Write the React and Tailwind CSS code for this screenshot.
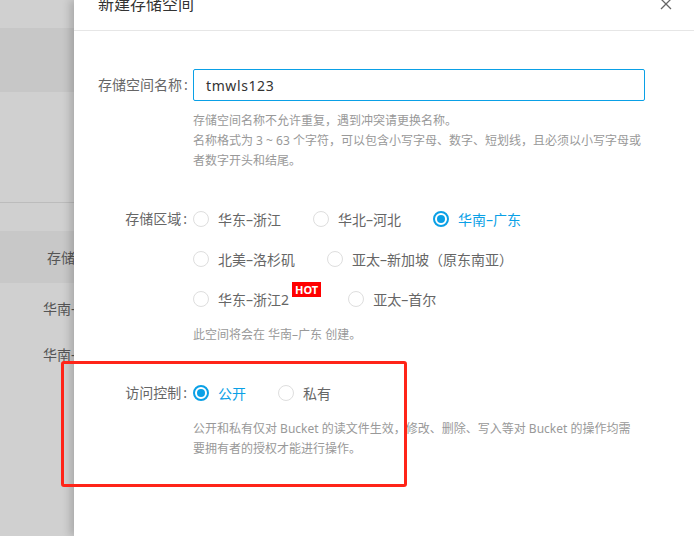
import React from "react";

const BLUE = "text-[#0aa0e6]";

const Radio = ({ checked, label, hot, className = "mr-[32px]" }) => (
  <label className={`flex items-center h-[40px] ${className}`}>
    {checked ? (
      <span className="w-[16px] h-[16px] rounded-full border-2 border-[#0aa0e6] flex items-center justify-center">
        <span className="w-[8px] h-[8px] rounded-full bg-[#0aa0e6]" />
      </span>
    ) : (
      <span className="w-[16px] h-[16px] rounded-full border border-[#dedede] bg-white" />
    )}
    <span className={`ml-[9px] text-[14px] whitespace-nowrap ${checked ? BLUE : "text-[#666]"}`}>{label}</span>
    {hot && (
      <span className="ml-[3px] -mt-[20px] h-[15px] px-[3px] bg-[#ff0000] text-white text-[11px] font-bold leading-[15px]">
        HOT
      </span>
    )}
  </label>
);

const Label = ({ text, lh = "leading-[40px]" }) => (
  <div className={`w-[89px] shrink-0 text-right text-[14px] text-[#666] whitespace-nowrap ${lh}`}>
    {text}
    <span className="ml-[2px]">:</span>
  </div>
);

const Help = ({ lines, className = "" }) => (
  <div className={`text-[12px] leading-[20px] text-[#999] ${className}`}>
    {lines.map((l, i) => (
      <div key={i} className="whitespace-nowrap">{l}</div>
    ))}
  </div>
);

export default function App() {
  return (
    <div
      className="w-[694px] h-[536px] flex overflow-hidden relative"
      style={{ fontFamily: '"Noto Sans", "Noto Sans CJK SC", sans-serif' }}
    >
      {/* dimmed page behind */}
      <div className="w-[74px] shrink-0 bg-[#d0d0d0] overflow-hidden text-[14px] text-[#555]">
        <div className="h-[28px]" />
        <div className="h-[64px] bg-[#c7c7c7]" />
        <div className="h-[111px] border-b border-[#bcbcbc]" />
        <div className="h-[28px]" />
        <div className="h-[52px] bg-[#c8c8c8] flex items-center pl-[47px] whitespace-nowrap">存储空间</div>
        <div className="h-[50px] flex items-center pl-[43px] whitespace-nowrap">华南–广东</div>
        <div className="h-[42px] flex items-center pl-[43px] whitespace-nowrap">华南–广东</div>
      </div>

      {/* drawer */}
      <div className="flex-1 bg-white relative z-10 shadow-[-4px_0_8px_rgba(0,0,0,0.18)]">
        <div className="h-[31px] border-b border-[#e6e6e6] flex justify-between items-start pl-[24px] pr-[22px]">
          <div className="-mt-[6px] text-[16px] leading-[20px] text-[#333]">新建存储空间</div>
          <svg className="-mt-[2px]" width="12" height="12" viewBox="0 0 12 12" fill="none" stroke="#666" strokeWidth="1.3">
            <path d="M1 1l10 10M11 1L1 11" />
          </svg>
        </div>

        <div className="pl-[24px] pt-[38px]">
          {/* name */}
          <div className="flex">
            <Label text="存储空间名称" lh="leading-[32px]" />
            <div className="ml-[6px] w-[452px]">
              <div className="h-[32px] border border-[#0aa0e6] rounded-[2px] flex items-center pl-[12px] text-[14px] text-[#333] tracking-[0.6px]">
                tmwls123
              </div>
              <Help
                className="mt-[10px]"
                lines={[
                  "存储空间名称不允许重复，遇到冲突请更换名称。",
                  "名称格式为 3 ~ 63 个字符，可以包含小写字母、数字、短划线，且必须以小写字母或",
                  "者数字开头和结尾。",
                ]}
              />
            </div>
          </div>

          {/* region */}
          <div className="flex mt-[28px]">
            <Label text="存储区域" />
            <div className="ml-[6px] w-[452px]">
              <div className="flex">
                <Radio label="华东–浙江" />
                <Radio label="华北–河北" />
                <Radio label="华南–广东" checked />
              </div>
              <div className="flex">
                <Radio label="北美–洛杉矶" />
                <Radio label="亚太–新加坡（原东南亚）" />
              </div>
              <div className="flex">
                <Radio label="华东–浙江2" hot className="mr-[27px]" />
                <Radio label="亚太–首尔" />
              </div>
              <Help className="mt-[6px]" lines={["此空间将会在 华南–广东 创建。"]} />
            </div>
          </div>

          {/* access */}
          <div className="flex mt-[28px]">
            <Label text="访问控制" />
            <div className="ml-[6px] w-[452px]">
              <div className="flex">
                <Radio label="公开" checked />
                <Radio label="私有" />
              </div>
              <Help
                className="mt-[6px]"
                lines={[
                  "公开和私有仅对 Bucket 的读文件生效，修改、删除、写入等对 Bucket 的操作均需",
                  "要拥有者的授权才能进行操作。",
                ]}
              />
            </div>
          </div>
        </div>
      </div>

      {/* red annotation box */}
      <div className="absolute left-[61px] top-[361px] w-[346px] h-[126px] border-[3px] border-[#ff2418] rounded-[3px] z-20 pointer-events-none" />
    </div>
  );
}
